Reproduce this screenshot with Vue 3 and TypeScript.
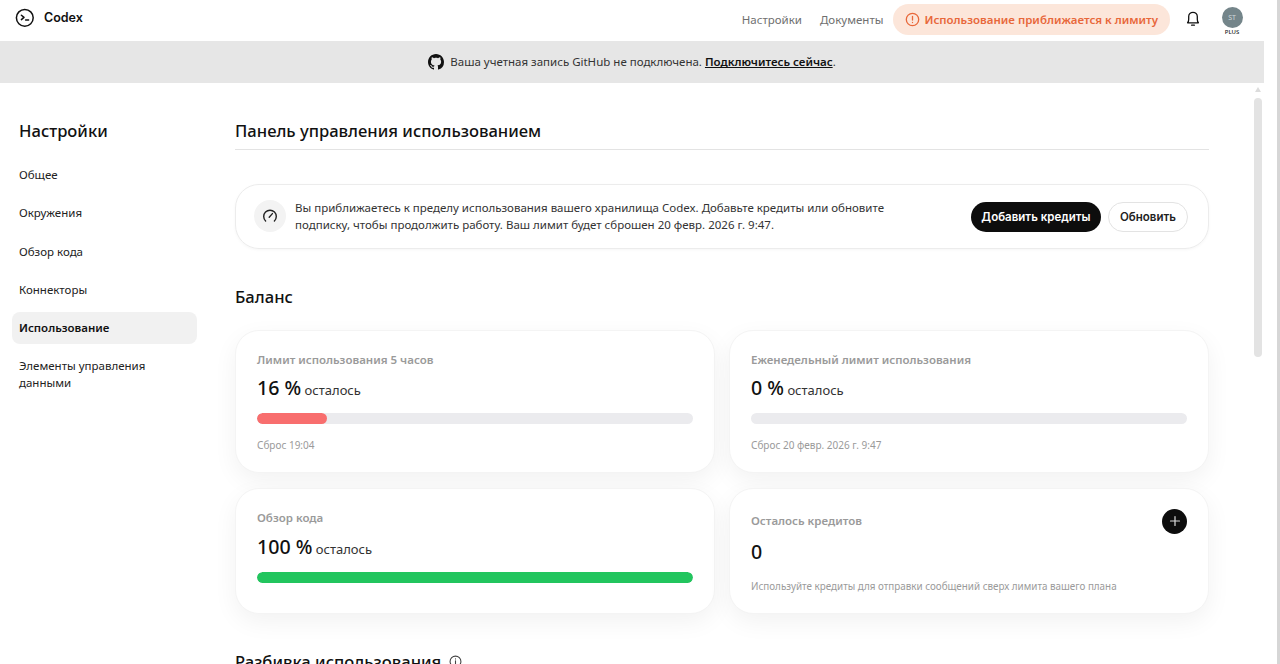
<script setup lang="ts">
interface NavItem { label: string; active?: boolean }
const nav: NavItem[] = [
  { label: 'Общее' },
  { label: 'Окружения' },
  { label: 'Обзор кода' },
  { label: 'Коннекторы' },
  { label: 'Использование', active: true },
  { label: 'Элементы управления данными' },
]
</script>

<template>
  <div class="app">
    <header class="top">
      <div class="brand">
        <svg class="logo" width="20" height="20" viewBox="0 0 20 20" fill="none" stroke="#111" stroke-width="1.5" stroke-linecap="round" stroke-linejoin="round">
          <circle cx="9.8" cy="9.8" r="8.4" />
          <path d="M6.4 7.2 9 9.4l-2.6 2.2M10.6 12h3" />
        </svg>
        <span>Codex</span>
      </div>
      <nav class="top-links">
        <a>Настройки</a>
        <a>Документы</a>
        <div class="warn">
          <svg width="15" height="15" viewBox="0 0 16 16" fill="none" stroke="#e8683a" stroke-width="1.4" stroke-linecap="round">
            <circle cx="8" cy="8" r="6.6" />
            <path d="M8 4.6v4M8 11.1v.2" />
          </svg>
          <span>Использование приближается к лимиту</span>
        </div>
        <svg class="bell" width="16" height="17" viewBox="0 0 16 17" fill="none" stroke="#111" stroke-width="1.3" stroke-linecap="round" stroke-linejoin="round">
          <path d="M2.6 12.8c.8-.9 1.1-2 1.1-3.6V6.6a4.3 4.3 0 0 1 8.6 0v2.6c0 1.6.3 2.7 1.1 3.6z" />
          <path d="M6.6 15.2h2.8" />
        </svg>
        <div class="avatar">
          <span class="circle">ST</span>
          <span class="plus">PLUS</span>
        </div>
      </nav>
    </header>

    <div class="banner">
      <svg width="16" height="16" viewBox="0 0 16 16" fill="#111">
        <path d="M8 0C3.58 0 0 3.58 0 8c0 3.54 2.29 6.53 5.47 7.59.4.07.55-.17.55-.38 0-.19-.01-.82-.01-1.49-2.01.37-2.53-.49-2.69-.94-.09-.23-.48-.94-.82-1.13-.28-.15-.68-.52-.01-.53.63-.01 1.08.58 1.23.82.72 1.21 1.87.87 2.33.66.07-.52.28-.87.51-1.07-1.78-.2-3.64-.89-3.64-3.95 0-.87.31-1.59.82-2.15-.08-.2-.36-1.02.08-2.12 0 0 .67-.21 2.2.82.64-.18 1.32-.27 2-.27s1.36.09 2 .27c1.53-1.04 2.2-.82 2.2-.82.44 1.1.16 1.92.08 2.12.51.56.82 1.27.82 2.15 0 3.07-1.87 3.75-3.65 3.95.29.25.54.73.54 1.48 0 1.07-.01 1.93-.01 2.2 0 .21.15.46.55.38A8 8 0 0 0 16 8c0-4.42-3.58-8-8-8z" />
      </svg>
      <span>Ваша учетная запись GitHub не подключена. <b>Подключитесь сейчас</b>.</span>
    </div>

    <div class="body">
      <aside class="side">
        <h2>Настройки</h2>
        <ul>
          <li v-for="item in nav" :key="item.label" :class="{ active: item.active }">{{ item.label }}</li>
        </ul>
      </aside>

      <main class="main">
        <h1>Панель управления использованием</h1>

        <section class="alert">
          <span class="gauge">
            <svg width="16" height="16" viewBox="0 0 16 16" fill="none" stroke="#222" stroke-width="1.4" stroke-linecap="round">
              <path d="M3.6 13A6.3 6.3 0 1 1 12.4 13" />
              <path d="M7.2 9.2 10.4 5.6" />
            </svg>
          </span>
          <p>Вы приближаетесь к пределу использования вашего хранилища Codex. Добавьте кредиты или обновите подписку, чтобы продолжить работу. Ваш лимит будет сброшен 20 февр. 2026 г. 9:47.</p>
          <div class="alert-actions">
            <button class="btn dark">Добавить кредиты</button>
            <button class="btn light">Обновить</button>
          </div>
        </section>

        <h3>Баланс</h3>

        <div class="grid">
          <article class="card tall">
            <div class="label">Лимит использования 5 часов</div>
            <div class="value"><b>16 %</b> осталось</div>
            <div class="track"><div class="fill red" :style="{ width: '16%' }"></div></div>
            <div class="note">Сброс 19:04</div>
          </article>
          <article class="card tall">
            <div class="label">Еженедельный лимит использования</div>
            <div class="value"><b>0 %</b> осталось</div>
            <div class="track"></div>
            <div class="note">Сброс 20 февр. 2026 г. 9:47</div>
          </article>
          <article class="card short">
            <div class="label">Обзор кода</div>
            <div class="value"><b>100 %</b> осталось</div>
            <div class="track"><div class="fill green" :style="{ width: '100%' }"></div></div>
          </article>
          <article class="card short credits">
            <div class="credits-head">
              <div class="label">Осталось кредитов</div>
              <span class="add">
                <svg width="12" height="12" viewBox="0 0 12 12" stroke="#ddd" stroke-width="1.2" stroke-linecap="round">
                  <path d="M6 1.5v9M1.5 6h9" />
                </svg>
              </span>
            </div>
            <div class="value zero"><b>0</b></div>
            <div class="note">Используйте кредиты для отправки сообщений сверх лимита вашего плана</div>
          </article>
        </div>

        <h3 class="breakdown">
          Разбивка использования
          <svg width="13" height="13" viewBox="0 0 12 12" fill="none" stroke="#444" stroke-width="1" stroke-linecap="round">
            <circle cx="6" cy="6" r="5" />
            <path d="M6 5.4v3M6 3.6v.1" />
          </svg>
        </h3>
      </main>
    </div>

    <div class="scroll-arrow"></div>
    <div class="scroll-thumb"></div>
    <div class="edge"></div>
  </div>
</template>

<style>
html, body { margin: 0; background: #fff; overflow: hidden; }
</style>

<style scoped>
.app {
  position: relative;
  width: 1280px;
  height: 664px;
  overflow: hidden;
  background: #fff;
  color: #111;
  font-family: "Noto Sans", "Open Sans", sans-serif;
}
.top {
  height: 41px;
  display: flex;
  align-items: center;
  justify-content: space-between;
  padding: 0 37px 3px 15px;
  box-sizing: border-box;
}
.brand {
  display: flex;
  align-items: center;
  gap: 9px;
  font-family: Inter, sans-serif;
  font-weight: 600;
  font-size: 12.5px;
  margin-top: -3px;
}
.top-links {
  display: flex;
  align-items: center;
  font-size: 11.5px;
  color: #6f6f6f;
}
.top-links a { margin-right: 18px; }
.top-links a + a { margin-right: 10px; }
.warn {
  display: flex;
  align-items: center;
  gap: 4px;
  height: 31px;
  padding: 0 12px;
  border-radius: 16px;
  background: #fce6da;
  color: #e8683a;
  font-weight: 600;
  font-size: 11.5px;
  box-sizing: border-box;
}
.bell { margin-left: 15px; margin-right: 20px; margin-top: -1px; }
.avatar {
  width: 22px;
  height: 33px;
  margin-top: 3px;
  display: flex;
  flex-direction: column;
  align-items: center;
}
.circle {
  flex: none;
  width: 21px;
  height: 21px;
  border-radius: 50%;
  background: #74858a;
  color: #cfd8da;
  font-size: 7px;
  display: flex;
  align-items: center;
  justify-content: center;
  margin-top: 3px;
}
.plus {
  flex: none;
  font-size: 6px;
  line-height: 8px;
  color: #222;
  margin-top: 0;
  font-weight: 500;
}
.banner {
  width: 1264px;
  height: 41.5px;
  background: #e6e6e6;
  display: flex;
  align-items: center;
  justify-content: center;
  gap: 6px;
  font-size: 11.5px;
  color: #333;
}
.banner b {
  font-weight: 600;
  color: #111;
  text-decoration: underline;
}
.body {
  display: flex;
  height: 582px;
  overflow: hidden;
}
.side {
  width: 235px;
  flex: none;
  box-sizing: border-box;
  padding: 35px 38px 0 12px;
}
.side h2 {
  margin: 0 0 16px 7px;
  font-size: 16.6px;
  line-height: 25px;
  font-weight: 500;
  color: #111;
}
.side ul {
  list-style: none;
  margin: 0;
  padding: 0;
  display: flex;
  flex-direction: column;
  gap: 6.3px;
}
.side li {
  padding: 7.5px 7px;
  font-size: 11.5px;
  line-height: 17px;
  border-radius: 8px;
  color: #222;
}
.side li.active {
  background: #f1f1f1;
  font-weight: 600;
  color: #111;
}
.main {
  width: 974px;
  flex: none;
  padding-bottom: 40px;
}
.main h1 {
  margin: 35px 0 0;
  padding-bottom: 5px;
  height: 26px;
  line-height: 26px;
  font-size: 16.6px;
  font-weight: 500;
  border-bottom: 1px solid #e3e3e3;
}
.alert {
  margin-top: 34px;
  height: 65px;
  box-sizing: border-box;
  border: 1px solid #ececec;
  border-radius: 24px;
  box-shadow: 0 1px 3px rgba(0, 0, 0, 0.04);
  display: flex;
  align-items: center;
  padding: 0 20px 0 18px;
}
.gauge {
  width: 32px;
  height: 32px;
  flex: none;
  border-radius: 50%;
  background: #f3f3f3;
  display: flex;
  align-items: center;
  justify-content: center;
  margin-right: 9px;
}
.alert p {
  margin: 0;
  width: 620px;
  flex: none;
  font-size: 11.5px;
  line-height: 17px;
  color: #333;
}
.alert-actions {
  margin-left: auto;
  margin-top: 2px;
  display: flex;
  align-items: center;
  gap: 7px;
}
.btn {
  font-family: Inter, "Noto Sans", sans-serif;
  font-size: 11.5px;
  font-weight: 600;
  border-radius: 15px;
  height: 30px;
  padding: 0;
  box-sizing: border-box;
}
.btn.dark { width: 130px; background: #0d0d0d; color: #fff; border: none; }
.btn.light { width: 80px; background: #fff; color: #222; border: 1px solid #e3e3e3; }
h3 {
  margin: 36px 0 21px;
  font-size: 16.6px;
  line-height: 24px;
  font-weight: 500;
  color: #111;
}
.grid {
  display: grid;
  grid-template-columns: 480px 480px;
  grid-template-rows: 143px 126px;
  gap: 15px 14px;
}
.card {
  box-sizing: border-box;
  border: 1px solid #f4f4f4;
  border-radius: 24px;
  background: #fff;
  box-shadow: 0 8px 24px rgba(0, 0, 0, 0.055);
  padding: 20px 21px 0;
}
.label {
  font-size: 11.5px;
  line-height: 18px;
  font-weight: 600;
  color: #9a9a9a;
}
.value {
  margin-top: 5px;
  font-size: 13px;
  line-height: 28px;
  color: #333;
}
.value b {
  font-size: 19.6px;
  font-weight: 500;
  color: #111;
}
.track {
  height: 11px;
  margin-top: 9px;
  border-radius: 6px;
  background: #ebebee;
  overflow: hidden;
}
.fill { height: 100%; border-radius: 6px; }
.red { background: #f86e6e; }
.green { background: #22c55e; }
.note {
  margin-top: 14px;
  font-size: 10px;
  line-height: 14px;
  color: #9a9a9a;
}
.short .value { margin-top: 6px; }
.short .track { margin-top: 9px; }
.credits-head {
  display: flex;
  align-items: center;
  justify-content: space-between;
}
.add {
  width: 25px;
  height: 25px;
  border-radius: 50%;
  background: #0d0d0d;
  display: flex;
  align-items: center;
  justify-content: center;
}
.short .value.zero { margin-top: 4px; }
.credits .note { margin-top: 11px; font-size: 9.85px; }
.breakdown {
  margin: 36px 0 0;
  display: flex;
  align-items: center;
  gap: 8px;
}
.scroll-arrow {
  position: absolute;
  left: 1255px;
  top: 87px;
  width: 0;
  height: 0;
  border-left: 3.5px solid transparent;
  border-right: 3.5px solid transparent;
  border-bottom: 5px solid #dcdcdc;
}
.scroll-thumb {
  position: absolute;
  left: 1254px;
  top: 98px;
  width: 8px;
  height: 259px;
  border-radius: 4px;
  background: #e3e3e3;
}
.edge {
  position: absolute;
  right: 0;
  top: 0;
  bottom: 0;
  width: 3px;
  background: #d6d6d6;
}
</style>
